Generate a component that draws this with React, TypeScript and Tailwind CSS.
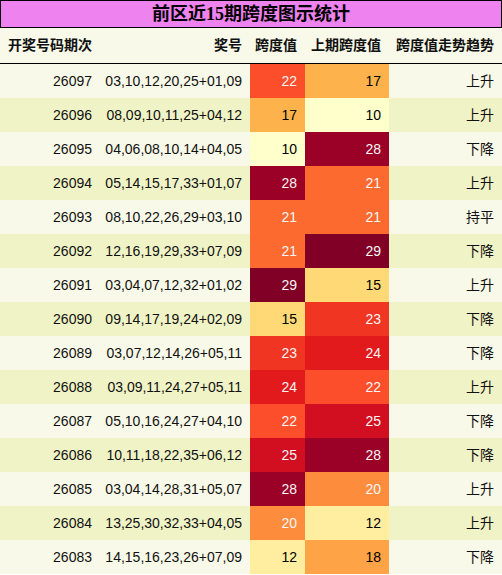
type Row = { issue: string; nums: string; span: number; prev: number; trend: string }

const rows: Row[] = [
  { issue: "26097", nums: "03,10,12,20,25+01,09", span: 22, prev: 17, trend: "上升" },
  { issue: "26096", nums: "08,09,10,11,25+04,12", span: 17, prev: 10, trend: "上升" },
  { issue: "26095", nums: "04,06,08,10,14+04,05", span: 10, prev: 28, trend: "下降" },
  { issue: "26094", nums: "05,14,15,17,33+01,07", span: 28, prev: 21, trend: "上升" },
  { issue: "26093", nums: "08,10,22,26,29+03,10", span: 21, prev: 21, trend: "持平" },
  { issue: "26092", nums: "12,16,19,29,33+07,09", span: 21, prev: 29, trend: "下降" },
  { issue: "26091", nums: "03,04,07,12,32+01,02", span: 29, prev: 15, trend: "上升" },
  { issue: "26090", nums: "09,14,17,19,24+02,09", span: 15, prev: 23, trend: "下降" },
  { issue: "26089", nums: "03,07,12,14,26+05,11", span: 23, prev: 24, trend: "下降" },
  { issue: "26088", nums: "03,09,11,24,27+05,11", span: 24, prev: 22, trend: "上升" },
  { issue: "26087", nums: "05,10,16,24,27+04,10", span: 22, prev: 25, trend: "下降" },
  { issue: "26086", nums: "10,11,18,22,35+06,12", span: 25, prev: 28, trend: "下降" },
  { issue: "26085", nums: "03,04,14,28,31+05,07", span: 28, prev: 20, trend: "上升" },
  { issue: "26084", nums: "13,25,30,32,33+04,05", span: 20, prev: 12, trend: "上升" },
  { issue: "26083", nums: "14,15,16,23,26+07,09", span: 12, prev: 18, trend: "下降" },
]

// heat colours, YlOrRd-like
const heat: Record<number, string> = {
  10: "bg-[#ffffcc] text-black",
  12: "bg-[#ffeda0] text-black",
  15: "bg-[#fed976] text-black",
  17: "bg-[#feb24c] text-black",
  18: "bg-[#fea446] text-black",
  20: "bg-[#fd8d3c] text-[#f5f5f5]",
  21: "bg-[#fd6a2f] text-[#f5f5f5]",
  22: "bg-[#fc4e2a] text-[#f5f5f5]",
  23: "bg-[#f03523] text-[#f5f5f5]",
  24: "bg-[#e31a1c] text-[#f5f5f5]",
  25: "bg-[#d20f20] text-[#f5f5f5]",
  28: "bg-[#9b0026] text-[#f5f5f5]",
  29: "bg-[#800026] text-[#f5f5f5]",
}

const cols = "grid grid-cols-[100px_150px_55px_84px_1fr]"

export default function App() {
  return (
    <div className="w-[502px] h-[575px] overflow-hidden bg-white font-['Liberation_Sans','Noto_Sans_CJK_SC',sans-serif] text-[14px] text-[#111]">
      {/* Title */}
      <div className="h-[28px] border border-black bg-[#ee82ee] flex items-center justify-center">
        <h1 className="font-['Liberation_Serif','Noto_Sans_CJK_SC',serif] font-bold text-[18px] leading-none text-black">
          前区近15期跨度图示统计
        </h1>
      </div>

      {/* Header */}
      <div className={`${cols} h-[36px] bg-[#f8f9e8] border-b border-black font-bold items-center`}>
        <div className="pl-2">开奖号码期次</div>
        <div className="pr-2 text-right">奖号</div>
        <div className="pr-2 text-right">跨度值</div>
        <div className="pr-2 text-right">上期跨度值</div>
        <div className="pr-2 text-right">跨度值走势趋势</div>
      </div>

      {/* Rows */}
      {rows.map((r, i) => (
        <div
          key={r.issue}
          className={`${cols} h-[34px] ${i % 2 === 0 ? "bg-[#f8f9e8]" : "bg-[#eff3c6]"}`}
        >
          <div className="pr-2 flex items-center justify-end">{r.issue}</div>
          <div className="pr-2 flex items-center justify-end">{r.nums}</div>
          <div className={`pr-2 flex items-center justify-end ${heat[r.span]}`}>{r.span}</div>
          <div className={`pr-2 flex items-center justify-end ${heat[r.prev]}`}>{r.prev}</div>
          <div className="pr-2 flex items-center justify-end">{r.trend}</div>
        </div>
      ))}
    </div>
  )
}
